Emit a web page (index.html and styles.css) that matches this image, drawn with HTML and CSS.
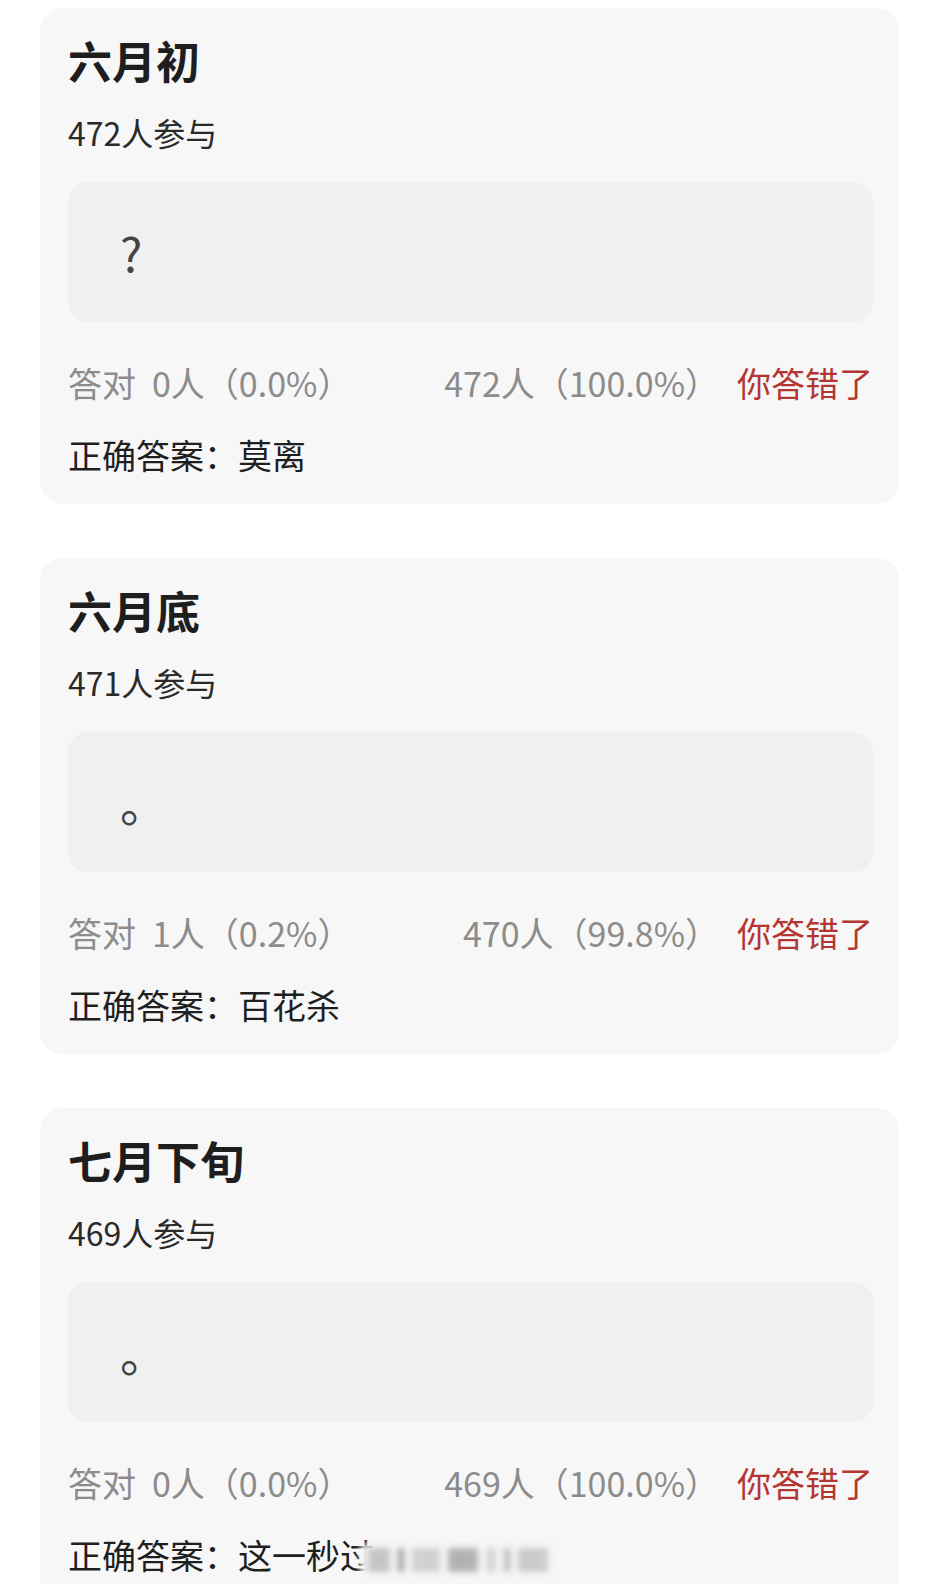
FILE: index.html
```html
<!DOCTYPE html>
<html lang="zh-CN">
<head>
<meta charset="utf-8">
<title>答题结果</title>
<link rel="stylesheet" href="styles.css">
</head>
<body>
<main class="list">
  <section class="card">
    <h2 class="card-title">六月初</h2>
    <p class="card-count">472人参与</p>
    <div class="reply"><span class="reply-text">?</span></div>
    <div class="stats">
      <span class="stat-right-count"><span class="label">答对</span>0人（0.0%）</span>
      <span class="stat-group">
        <span class="stat-wrong">472人（100.0%）</span>
        <span class="verdict">你答错了</span>
      </span>
    </div>
    <p class="answer">正确答案：莫离</p>
  </section>

  <section class="card">
    <h2 class="card-title">六月底</h2>
    <p class="card-count">471人参与</p>
    <div class="reply"><span class="reply-text">。</span></div>
    <div class="stats">
      <span class="stat-right-count"><span class="label">答对</span>1人（0.2%）</span>
      <span class="stat-group">
        <span class="stat-wrong">470人（99.8%）</span>
        <span class="verdict">你答错了</span>
      </span>
    </div>
    <p class="answer">正确答案：百花杀</p>
  </section>

  <section class="card">
    <h2 class="card-title">七月下旬</h2>
    <p class="card-count">469人参与</p>
    <div class="reply"><span class="reply-text">。</span></div>
    <div class="stats">
      <span class="stat-right-count"><span class="label">答对</span>0人（0.0%）</span>
      <span class="stat-group">
        <span class="stat-wrong">469人（100.0%）</span>
        <span class="verdict">你答错了</span>
      </span>
    </div>
    <p class="answer">正确答案：这一秒过<span class="masked"><i></i><i></i><i></i><i></i><i></i><i></i><i></i></span></p>
  </section>
</main>
</body>
</html>
```

FILE: styles.css
```css
html, body {
  margin: 0;
  padding: 0;
  background: #ffffff;
}

body {
  font-family: "Noto Sans CJK SC", "Noto Sans", sans-serif;
  color: #222222;
}

.list {
  display: flex;
  flex-direction: column;
  gap: 54px;
  padding: 8px 41px 0 40px;
}

.card {
  background: #f7f7f7;
  border-radius: 22px;
  padding: 26px 26px 27px 28px;
}

.card-title {
  margin: 0;
  font-size: 44px;
  line-height: 52px;
  font-weight: 700;
  color: #1e1e1e;
}

.card-count {
  margin: 26px 0 0;
  font-size: 32px;
  line-height: 40px;
  color: #2a2a2a;
}

.reply {
  margin-top: 30px;
  height: 140px;
  border-radius: 20px;
  background: #f0f0f0;
  display: flex;
  align-items: center;
  padding-left: 52px;
}

.reply-text {
  font-size: 47px;
  line-height: 50px;
  color: #444444;
}

.stats {
  margin-top: 41px;
  display: flex;
  justify-content: space-between;
  align-items: center;
  font-size: 34px;
  line-height: 40px;
  color: #8c8c8c;
}

.label {
  margin-right: 16px;
}

.stat-group {
  display: flex;
  gap: 18px;
}

.verdict {
  color: #b33632;
}

.answer {
  margin: 30px 0 0;
  font-size: 34px;
  line-height: 44px;
  color: #1f1f1f;
}

.masked {
  display: inline-flex;
  align-items: center;
  gap: 8px;
  vertical-align: middle;
  margin-left: -14px;
  height: 32px;
  padding: 0 8px;
  background: #f6f6f6;
  filter: blur(3px);
}

.masked i {
  display: block;
  width: 22px;
  height: 24px;
  background: #c4c4c4;
}

.masked i:nth-child(2) { width: 6px; background: #a0a0a0; }
.masked i:nth-child(3) { width: 28px; background: #d0d0d0; }
.masked i:nth-child(4) { width: 30px; background: #b2b2b2; }
.masked i:nth-child(5) { width: 10px; background: #d6d6d6; }
.masked i:nth-child(6) { width: 6px; background: #b8b8b8; }
.masked i:nth-child(7) { width: 30px; background: #cbcbcb; }
```
